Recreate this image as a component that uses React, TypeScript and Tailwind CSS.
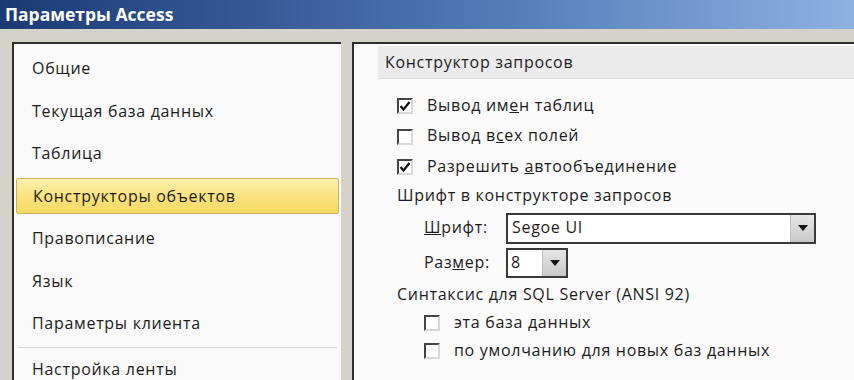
import { type ReactNode } from 'react';

const font = { fontFamily: '"Open Sans", "Noto Sans", sans-serif' };

const menu = [
  'Общие',
  'Текущая база данных',
  'Таблица',
  'Конструкторы объектов',
  'Правописание',
  'Язык',
  'Параметры клиента',
];

function CheckBox({ checked }: { checked?: boolean }) {
  return (
    <span className="flex h-[16px] w-[16px] shrink-0 items-center justify-center border-2 border-t-[#444] border-l-[#444] border-r-[#d8d8d8] border-b-[#d8d8d8] bg-white">
      {checked && (
        <svg viewBox="0 0 12 12" className="h-[12px] w-[12px]">
          <path d="M1.5 6 L4.5 9.5 L10.5 2" fill="none" stroke="#111" strokeWidth="2.2" />
        </svg>
      )}
    </span>
  );
}

function DropButton() {
  return (
    <span className="flex h-full w-[24px] items-center justify-center border-l border-[#bbb] bg-gradient-to-b from-[#e6e6e6] to-[#c9c9c9]">
      <svg viewBox="0 0 10 6" className="h-[6px] w-[10px]">
        <path d="M0 0 L10 0 L5 6 Z" fill="#111" />
      </svg>
    </span>
  );
}

function Row({ children, className }: { children: ReactNode; className: string }) {
  return <div className={`flex items-center ${className}`}>{children}</div>;
}

export default function App() {
  return (
    <div className="flex h-[380px] w-[854px] flex-col overflow-hidden bg-[#d5d2ca] text-[#1c1c1c]" style={font}>
      <div className="flex h-[29px] shrink-0 items-center bg-gradient-to-r from-[#1b3a74] via-[#4a70ae] to-[#8cb2e2] pl-[5px] text-[17.5px] font-bold text-white">
        Параметры Access
      </div>
      <div className="flex flex-1 gap-[11px] pl-[12px] pt-[13px] text-[16px] tracking-[0.7px]">
        <div className="flex w-[329px] flex-col border-l-2 border-t-2 border-[#2e2e2e] bg-[#f9f9f9] pt-[3px]">
          {menu.map((item, i) =>
            i === 3 ? (
              <div key={item} className="flex h-[42.5px] items-center px-[2px]">
                <div className="flex h-[36px] flex-1 items-center rounded-[2px] border border-[#c8b35c] bg-gradient-to-b from-[#fdf1b0] via-[#fae27e] to-[#f5d862] pl-[16px]">
                  {item}
                </div>
              </div>
            ) : (
              <div key={item} className="flex h-[42.5px] items-center pl-[18px]">
                {item}
              </div>
            ),
          )}
          <div className="mx-[4px] mt-[2px] border-t border-[#d6d6d6]" />
          <div className="flex h-[42px] items-center pl-[18px]">Настройка ленты</div>
        </div>
        <div className="flex flex-1 flex-col border-l-2 border-t-2 border-[#2e2e2e] bg-[#fafafa]">
          <div className="ml-[24px] mt-[2px] flex h-[33px] items-center border-b border-[#dcdcdc] bg-[#ebebeb] pl-[7px] pb-[1px]">
            Конструктор запросов
          </div>
          <div className="flex flex-col pl-[43px] pt-[12px]">
            <Row className="h-[30px] gap-[14px]">
              <CheckBox checked />
              <span className="-mt-[3px]">
                Вывод им<u>е</u>н таблиц
              </span>
            </Row>
            <Row className="h-[31px] gap-[14px]">
              <CheckBox />
              <span className="-mt-[3px]">
                Вывод в<u>с</u>ех полей
              </span>
            </Row>
            <Row className="h-[30px] gap-[14px]">
              <CheckBox checked />
              <span className="-mt-[3px]">
                Разрешить <u>а</u>втообъединение
              </span>
            </Row>
            <Row className="h-[28px]">
              <span className="-mt-[3px]">Шрифт в конструкторе запросов</span>
            </Row>
            <Row className="h-[36px] pl-[27px]">
              <span className="-mt-[3px] w-[82px]">
                <u>Ш</u>рифт:
              </span>
              <div className="flex h-[31px] w-[310px] items-center border-2 border-[#3a3a3a] bg-white">
                <span className="-mt-[3px] flex-1 pl-[4px]">Segoe UI</span>
                <DropButton />
              </div>
            </Row>
            <Row className="h-[34px] pl-[27px]">
              <span className="-mt-[3px] w-[82px]">
                Раз<u>м</u>ер:
              </span>
              <div className="flex h-[30px] w-[62px] items-center border-2 border-[#3a3a3a] bg-white">
                <span className="-mt-[3px] flex-1 pl-[3px]">8</span>
                <DropButton />
              </div>
            </Row>
            <Row className="h-[30px]">
              <span className="-mt-[3px]">Синтаксис для SQL Server (ANSI 92)</span>
            </Row>
            <Row className="h-[26px] gap-[14px] pl-[27px]">
              <CheckBox />
              <span className="-mt-[3px]">эта база данных</span>
            </Row>
            <Row className="h-[30px] gap-[14px] pl-[27px]">
              <CheckBox />
              <span className="-mt-[3px]">по умолчанию для новых баз данных</span>
            </Row>
          </div>
        </div>
      </div>
    </div>
  );
}
